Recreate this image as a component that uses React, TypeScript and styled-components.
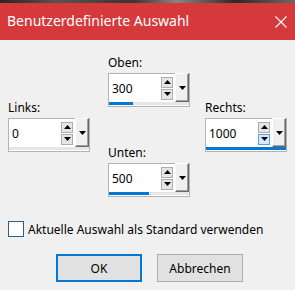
import React from 'react';
import styled, { createGlobalStyle } from 'styled-components';

const GlobalStyle = createGlobalStyle`
    html, body {
        margin: 0;
        padding: 0;
        background: #f0f0f0;
    }
    body {
        font-family: "Noto Sans", "Liberation Sans", sans-serif;
    }
`;

const Window = styled.div`
    width: 295px;
    height: 290px;
    display: flex;
    flex-direction: column;
    background: #f0f0f0;
    overflow: hidden;
`;

const PhotoStrip = styled.div`
    height: 3px;
    background: linear-gradient(90deg, #2a2422 0%, #5a5350 20%, #3a3431 45%, #8a8582 60%, #2c2826 80%, #6b6866 100%);
`;

const TitleBar = styled.div`
    height: 37px;
    display: flex;
    align-items: center;
    justify-content: space-between;
    padding: 0 8px 0 7px;
    background: #d5393c;
    color: #ffffff;
`;

const Title = styled.span`
    font-size: 14px;
    margin-top: -2px;
`;

const CloseIcon = styled.svg`
    width: 12px;
    height: 12px;
    margin-top: 1px;
`;

const Body = styled.div`
    display: flex;
    flex-direction: column;
    padding: 15px 8px 0 8px;
`;

const Fields = styled.div`
    display: flex;
    align-items: center;
`;

const CenterColumn = styled.div`
    display: flex;
    flex-direction: column;
    gap: 38px;
    margin: 0 15px 0 18px;
`;

const Group = styled.div`
    display: flex;
    flex-direction: column;
`;

const Label = styled.label`
    font-size: 12px;
    color: #000;
    line-height: 16px;
    margin: 0 0 2px 0;
`;

const SpinBox = styled.div`
    width: 80px;
    height: 32px;
    display: flex;
    flex-direction: column;
    border: 1px solid #b4b4b4;
    background: #ffffff;
`;

const SpinRow = styled.div`
    flex: 1;
    display: flex;
    align-items: stretch;
`;

const Value = styled.div`
    flex: 1;
    display: flex;
    align-items: center;
    padding-left: 3px;
    font-size: 12px;
    color: #000;
`;

const Arrows = styled.div`
    display: flex;
    flex-direction: column;
    justify-content: center;
    gap: 1px;
    margin-right: 2px;
`;

const ArrowButton = styled.div<{ $hot?: boolean }>`
    width: 10px;
    height: 9px;
    border: 1px solid ${(p) => (p.$hot ? '#5aa0dc' : '#adadad')};
    background: ${(p) => (p.$hot ? '#d6e9f8' : '#e5e5e5')};
    display: flex;
    align-items: center;
    justify-content: center;
`;

const DropButton = styled.div`
    width: 12px;
    margin-top: -1px;
    border-left: 1px solid #ffffff;
    border-top: 1px solid #ffffff;
    border-right: 1px solid #696969;
    border-bottom: 1px solid #696969;
    background: #f0f0f0;
    display: flex;
    align-items: center;
    justify-content: center;
    box-shadow: inset -1px -1px 0 #a0a0a0;
`;

const Track = styled.div`
    height: 3px;
    margin: 0 0 1px 0;
    background: #e6e6e6;
`;

const Fill = styled.div`
    height: 3px;
    background: #0078d7;
`;

const CheckRow = styled.div`
    display: flex;
    align-items: center;
    gap: 4px;
    margin-top: 24px;
    height: 16px;
`;

const CheckBox = styled.div`
    width: 14px;
    height: 14px;
    border: 1px solid #2e5d92;
    background: #ffffff;
`;

const CheckLabel = styled.span`
    font-size: 12px;
    color: #000;
`;

const Buttons = styled.div`
    display: flex;
    justify-content: center;
    gap: 15px;
    margin-top: 17px;
    padding-left: 4px;
`;

const Button = styled.button<{ $default?: boolean }>`
    width: 86px;
    height: 28px;
    padding: 0;
    font-family: inherit;
    font-size: 12px;
    color: #000;
    background: #e1e1e1;
    border: ${(p) => (p.$default ? '2px solid #0078d7' : '1px solid #adadad')};
`;

const Up = () => (
    <svg width="7" height="4" viewBox="0 0 7 4">
        <polygon points="0,4 7,4 3.5,0" fill="#000" />
    </svg>
);

const Down = () => (
    <svg width="7" height="4" viewBox="0 0 7 4">
        <polygon points="0,0 7,0 3.5,4" fill="#000" />
    </svg>
);

const MAX = 1000;

const Spinner: React.FC<{ label: string; value: number; hotDown?: boolean }> = ({ label, value, hotDown }) => (
    <Group>
        <Label>{label}</Label>
        <SpinBox>
            <SpinRow>
                <Value>{value}</Value>
                <Arrows>
                    <ArrowButton>
                        <Up />
                    </ArrowButton>
                    <ArrowButton $hot={hotDown}>
                        <Down />
                    </ArrowButton>
                </Arrows>
                <DropButton>
                    <Down />
                </DropButton>
            </SpinRow>
            <Track>
                <Fill style={{ width: `${Math.min(1, value / MAX) * 100}%` }} />
            </Track>
        </SpinBox>
    </Group>
);

const App: React.FC = () => (
    <>
        <GlobalStyle />
        <Window>
            <PhotoStrip />
            <TitleBar>
                <Title>Benutzerdefinierte Auswahl</Title>
                <CloseIcon viewBox="0 0 12 12">
                    <path d="M0.5 0.5 L11.5 11.5 M11.5 0.5 L0.5 11.5" stroke="#fff" strokeWidth="1.1" fill="none" />
                </CloseIcon>
            </TitleBar>
            <Body>
                <Fields>
                    <Spinner label="Links:" value={0} />
                    <CenterColumn>
                        <Spinner label="Oben:" value={300} />
                        <Spinner label="Unten:" value={500} />
                    </CenterColumn>
                    <Spinner label="Rechts:" value={1000} hotDown />
                </Fields>
                <CheckRow>
                    <CheckBox />
                    <CheckLabel>Aktuelle Auswahl als Standard verwenden</CheckLabel>
                </CheckRow>
                <Buttons>
                    <Button $default>OK</Button>
                    <Button>Abbrechen</Button>
                </Buttons>
            </Body>
        </Window>
    </>
);

export default App;
